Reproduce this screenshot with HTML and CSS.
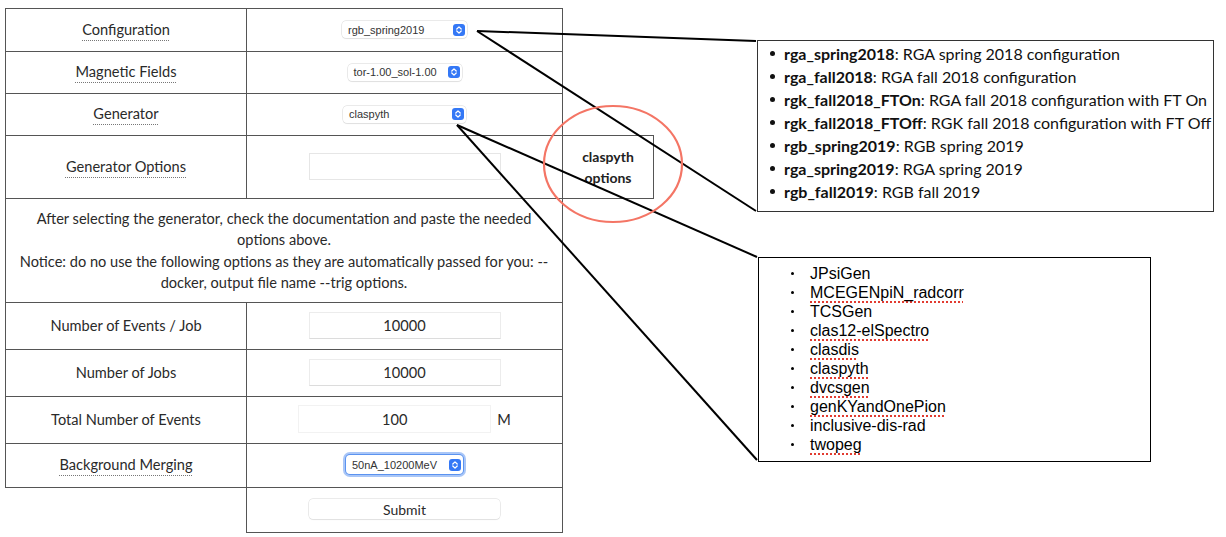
FILE: index.html
```html
<!DOCTYPE html>
<html>
<head>
<meta charset="utf-8">
<link rel="stylesheet" href="styles.css">
</head>
<body>
<div class="page">
  <table class="form">
    <colgroup><col class="c1"><col class="c2"><col class="c3"></colgroup>
    <tr class="r1">
      <td class="cell"><span class="abbr">Configuration</span></td>
      <td class="cell"><div class="select w-config"><span>rgb_spring2019</span><span class="stepper"><svg width="12" height="12" viewBox="0 0 12 12"><rect width="12" height="12" rx="3" fill="#3478f6"/><path d="M3.8 5 L6 2.9 L8.2 5 M3.8 7 L6 9.1 L8.2 7" fill="none" stroke="#fff" stroke-width="1.3" stroke-linecap="round" stroke-linejoin="round"/></svg></span></div></td>
      <td class="blank"></td>
    </tr>
    <tr class="r2">
      <td class="cell"><span class="abbr">Magnetic Fields</span></td>
      <td class="cell"><div class="select w-mag"><span>tor-1.00_sol-1.00</span><span class="stepper"><svg width="12" height="12" viewBox="0 0 12 12"><rect width="12" height="12" rx="3" fill="#3478f6"/><path d="M3.8 5 L6 2.9 L8.2 5 M3.8 7 L6 9.1 L8.2 7" fill="none" stroke="#fff" stroke-width="1.3" stroke-linecap="round" stroke-linejoin="round"/></svg></span></div></td>
      <td class="blank"></td>
    </tr>
    <tr class="r3">
      <td class="cell"><span class="abbr">Generator</span></td>
      <td class="cell"><div class="select w-gen"><span>claspyth</span><span class="stepper"><svg width="12" height="12" viewBox="0 0 12 12"><rect width="12" height="12" rx="3" fill="#3478f6"/><path d="M3.8 5 L6 2.9 L8.2 5 M3.8 7 L6 9.1 L8.2 7" fill="none" stroke="#fff" stroke-width="1.3" stroke-linecap="round" stroke-linejoin="round"/></svg></span></div></td>
      <td class="blank"></td>
    </tr>
    <tr class="r4">
      <td class="cell"><span class="abbr">Generator Options</span></td>
      <td class="cell"><div class="input empty"></div></td>
      <td class="cell note"><b>claspyth<br>options</b></td>
    </tr>
    <tr class="r5">
      <td class="cell info" colspan="2">After selecting the generator, check the documentation and paste the needed<br>options above.<br>Notice: do no use the following options as they are automatically passed for you: --<br>docker, output file name --trig options.</td>
      <td class="blank"></td>
    </tr>
    <tr class="r6">
      <td class="cell">Number of Events / Job</td>
      <td class="cell"><div class="input">10000</div></td>
      <td class="blank"></td>
    </tr>
    <tr class="r7">
      <td class="cell">Number of Jobs</td>
      <td class="cell"><div class="input">10000</div></td>
      <td class="blank"></td>
    </tr>
    <tr class="r8">
      <td class="cell">Total Number of Events</td>
      <td class="cell"><div class="total"><div class="input short">100</div><span class="unit">M</span></div></td>
      <td class="blank"></td>
    </tr>
    <tr class="r9">
      <td class="cell"><span class="abbr">Background Merging</span></td>
      <td class="cell"><div class="select w-bg focus"><span>50nA_10200MeV</span><span class="stepper"><svg width="12" height="12" viewBox="0 0 12 12"><rect width="12" height="12" rx="3" fill="#3478f6"/><path d="M3.8 5 L6 2.9 L8.2 5 M3.8 7 L6 9.1 L8.2 7" fill="none" stroke="#fff" stroke-width="1.3" stroke-linecap="round" stroke-linejoin="round"/></svg></span></div></td>
      <td class="blank"></td>
    </tr>
    <tr class="r10">
      <td class="blank"></td>
      <td class="cell"><div class="button">Submit</div></td>
      <td class="blank"></td>
    </tr>
  </table>

  <div class="callouts">
    <ul class="callout config-list">
      <li><b>rga_spring2018</b>: RGA spring 2018 configuration</li>
      <li><b>rga_fall2018</b>: RGA fall 2018 configuration</li>
      <li><b>rgk_fall2018_FTOn</b>: RGA fall 2018 configuration with FT On</li>
      <li><b>rgk_fall2018_FTOff</b>: RGK fall 2018 configuration with FT Off</li>
      <li><b>rgb_spring2019</b>: RGB spring 2019</li>
      <li><b>rga_spring2019</b>: RGA spring 2019</li>
      <li><b>rgb_fall2019</b>: RGB fall 2019</li>
    </ul>
    <ul class="callout gen-list">
      <li>JPsiGen</li>
      <li><span class="sp">MCEGENpiN_radcorr</span></li>
      <li>TCSGen</li>
      <li><span class="sp">clas12-elSpectro</span></li>
      <li><span class="sp">clasdis</span></li>
      <li><span class="sp">claspyth</span></li>
      <li><span class="sp">dvcsgen</span></li>
      <li><span class="sp">genKYandOnePion</span></li>
      <li>inclusive-dis-rad</li>
      <li><span class="sp">twopeg</span></li>
    </ul>
  </div>

  <svg class="overlay" width="1226" height="537" viewBox="0 0 1226 537">
    <g stroke="#000" stroke-width="2" fill="none">
      <line x1="477" y1="31" x2="756" y2="41"/>
      <line x1="477" y1="31" x2="756" y2="211"/>
      <line x1="457" y1="125" x2="757" y2="257"/>
      <line x1="457" y1="125" x2="757" y2="460"/>
    </g>
    <ellipse cx="613" cy="164" rx="69" ry="58" fill="none" stroke="#f47565" stroke-width="2.2"/>
  </svg>
</div>
</body>
</html>
```

FILE: styles.css
```css
html, body {
  margin: 0;
  padding: 0;
  background: #fff;
}

.page {
  position: relative;
  width: 1226px;
  height: 537px;
  display: flex;
  align-items: flex-start;
  padding: 8px 0 0 5px;
  box-sizing: border-box;
  font-family: "Lato", "Noto Sans", sans-serif;
  color: #2a2a2a;
}

.form {
  border-collapse: collapse;
  table-layout: fixed;
  width: 648px;
  font-size: 14.6px;
}

.c1 { width: 241px; }
.c2 { width: 316px; }
.c3 { width: 91px; }

.cell {
  border: 1px solid #555;
  text-align: center;
  vertical-align: middle;
  padding: 0 0 2px;
}

.blank {
  border: none;
  padding: 0;
}

.r1 { height: 43px; }
.r2 { height: 42px; }
.r3 { height: 42px; }
.r4 { height: 63px; }
.r5 { height: 104px; }
.r6 { height: 47px; }
.r7 { height: 47px; }
.r8 { height: 47px; }
.r9 { height: 44px; }
.r10 { height: 45px; }

.abbr {
  text-decoration: underline dotted #777;
  text-decoration-thickness: 1px;
  text-underline-offset: 5px;
}

.info {
  line-height: 21.5px;
  padding: 4px 6px 4px;
}

.note {
  font-size: 14px;
  line-height: 21px;
  color: #222;
  padding: 0;
}

.select {
  display: inline-flex;
  align-items: center;
  justify-content: space-between;
  box-sizing: border-box;
  height: 17px;
  padding: 0 2px 0 6px;
  background: #fff;
  border-radius: 4px;
  box-shadow: 0 0 0 0.5px #d6d6d6, 0 1px 1px rgba(0,0,0,0.08);
  font-family: "Liberation Sans", Arial, sans-serif;
  font-size: 11px;
  color: #333;
  vertical-align: middle;
}

.stepper {
  display: flex;
  width: 12px;
  height: 12px;
}

.w-config { width: 125px; }
.w-mag { width: 114px; }
.w-gen { width: 123px; }
.w-bg {
  width: 117px;
  height: 19px;
}
.focus {
  box-shadow: 0 0 0 1px #5b93f0, 0 0 0 3px #a9c6f7;
}

.input {
  display: inline-flex;
  align-items: center;
  justify-content: center;
  box-sizing: border-box;
  width: 192px;
  height: 27px;
  border: 1px solid #ececec;
  border-bottom-color: #dcdcdc;
  background: #fff;
  font-size: 14.6px;
  vertical-align: middle;
}

.input.empty {
  border-color: #e6e6e6;
}

.total {
  display: inline-flex;
  align-items: center;
  gap: 6px;
  vertical-align: middle;
}

.input.short {
  width: 193px;
  height: 28px;
  border-color: #f2f2f2;
}

.unit {
  font-size: 14.6px;
}

.button {
  display: inline-flex;
  align-items: center;
  justify-content: center;
  box-sizing: border-box;
  width: 191px;
  height: 20px;
  border-radius: 4px;
  background: #fff;
  box-shadow: 0 0 0 0.5px #d8d8d8, 0 1px 1px rgba(0,0,0,0.08);
  font-size: 14px;
  vertical-align: middle;
}

.callouts {
  display: flex;
  flex-direction: column;
  align-items: flex-start;
  margin-left: 103px;
}

.callout {
  list-style: none;
  margin: 0;
  box-sizing: border-box;
  background: #fff;
}

.config-list {
  margin-top: 32px;
  width: 457px;
  height: 172px;
  border: 1.5px solid #333;
  padding: 1px 0 0 26px;
  font-size: 16px;
  line-height: 23px;
  color: #111;
  white-space: nowrap;
}

.config-list li {
  position: relative;
}

.config-list li::before {
  content: "";
  position: absolute;
  left: -14px;
  top: 9px;
  width: 5px;
  height: 5px;
  border-radius: 50%;
  background: #111;
}

.config-list b {
  font-weight: 700;
}

.gen-list {
  margin-top: 45px;
  margin-left: 1px;
  width: 393px;
  height: 205px;
  border: 1px solid #000;
  padding: 6px 0 0 51px;
  font-family: "Liberation Sans", Arial, sans-serif;
  font-size: 16px;
  line-height: 19px;
  color: #000;
}

.gen-list li {
  position: relative;
  height: 19px;
}

.gen-list li::before {
  content: "";
  position: absolute;
  left: -19px;
  top: 8px;
  width: 3px;
  height: 3px;
  border-radius: 50%;
  background: #000;
}

.sp {
  text-decoration: underline dotted #e23b30;
  text-decoration-thickness: 2px;
  text-underline-offset: 3px;
}

.overlay {
  position: absolute;
  left: 0;
  top: 0;
  pointer-events: none;
}
```
